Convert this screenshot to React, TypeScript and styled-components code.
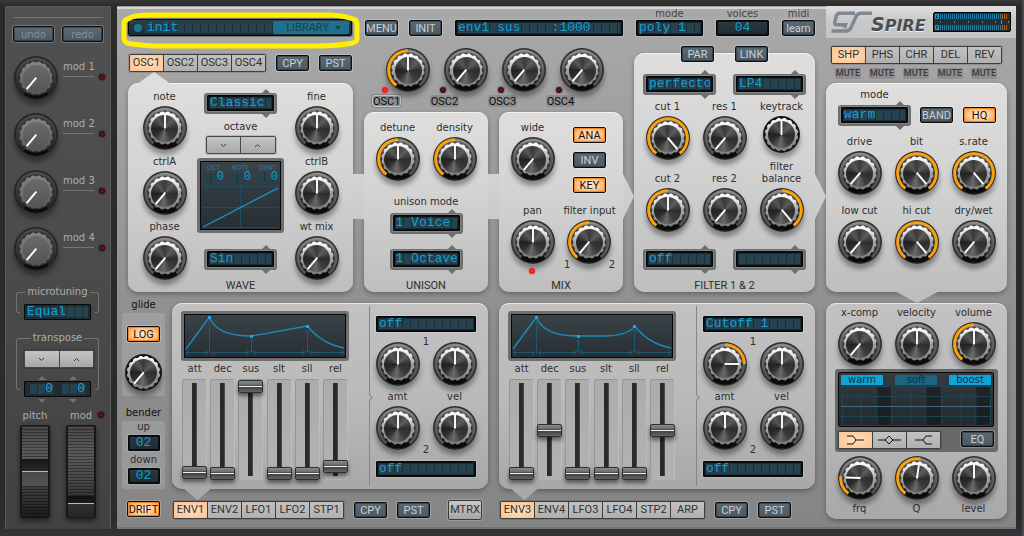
import React from "react";
import styled, { createGlobalStyle, css } from "styled-components";

const ui = `"DejaVu Sans", Verdana, sans-serif`;
const caps = `Roboto, "Liberation Sans", sans-serif`;
const mono = `"Liberation Mono", monospace`;

const Global = createGlobalStyle`
  *, *::before, *::after { box-sizing: border-box; }
  body { margin: 0; background: #2c2c2c; font: 10px/12px ${ui}; color: #2e2e2e; }
  button, input, select, output { font: inherit; color: inherit; margin: 0; padding: 0; }
  fieldset { margin: 0; padding: 0; border: 0; min-width: 0; }
`;

/* ---------- page frame ---------- */

const Page = styled.div`
  display: flex;
  gap: 6px;
  padding: 6px 6px 7px 5px;
  border-right: 2px solid #434b55;
  border-bottom: 1px solid #555557;
  background: linear-gradient(#383838, #2b2b2b 6px, #2b2b2b 520px, #343436);
`;

const Sidebar = styled.aside`
  flex: none;
  width: 106px;
  padding: 11px 8px;
  color: #adadad;
  background: linear-gradient(#505050, #4b4b4b 50%, #424242);
  box-shadow: inset -1px 0 #5a5a5a, inset 1px 1px #585858;
`;

const Main = styled.main`
  flex: 1;
  min-width: 0;
  display: grid;
  grid-template-columns: 698fr 190fr;
  gap: 11px;
  padding-bottom: 9px;
  background: linear-gradient(#a9a9a9, #9d9d9d 30%, #8f8f8f 60%, #858585);
  box-shadow: inset 0 1px #a2a2a2, inset 0 3px #d6d6d6, inset 0 -2px #727272;
`;

const Column = styled.div<{ $gap?: number; $top?: number; $align?: string }>`
  display: flex;
  flex-direction: column;
  min-width: 0;
  gap: ${(p) => p.$gap ?? 0}px;
  padding-top: ${(p) => p.$top ?? 0}px;
  align-items: ${(p) => p.$align ?? "stretch"};
`;

const Row = styled.div<{ $gap?: number; $left?: number; $justify?: string; $align?: string }>`
  display: flex;
  gap: ${(p) => p.$gap ?? 0}px;
  padding-left: ${(p) => p.$left ?? 0}px;
  justify-content: ${(p) => p.$justify ?? "flex-start"};
  align-items: ${(p) => p.$align ?? "center"};
`;

const Synth = styled(Column)`
  padding-left: 5px;
`;

const TopBar = styled.header`
  display: grid;
  grid-template-columns: 224fr auto 168fr 67px 53px 33px;
  gap: 13px;
  align-items: end;
  height: 40px;
  padding: 0 0 10px 6px;
`;

const OscSection = styled.section`
  display: grid;
  grid-template-columns: 225fr 259fr 181fr;
  gap: 11px;
  padding-left: 6px;
  margin-bottom: 11px;
`;

const OscMixer = styled.div`
  display: grid;
  grid-template-columns: repeat(4, 1fr);
  padding: 2px 23px 5px 8px;
`;

const TwoPanels = styled.div`
  flex: 1;
  display: grid;
  grid-template-columns: 1fr 1fr;
  gap: 11px;
`;

const ModSection = styled.section`
  display: flex;
  gap: 7px;
`;

const Envelopes = styled.div`
  flex: 1;
  display: grid;
  grid-template-columns: 1fr 1fr;
  gap: 11px;
`;

/* ---------- panels ---------- */

type Link = "bridge" | "arrow";

const Panel = styled.section<{ $tone?: "light" | "mid"; $link?: Link; $grow?: boolean; $top?: number; $bottom?: number }>`
  position: relative;
  display: flex;
  flex-direction: column;
  ${(p) => p.$grow && "flex: 1;"}
  padding-top: ${(p) => p.$top ?? 0}px;
  padding-bottom: ${(p) => p.$bottom ?? 0}px;
  border-radius: 10px;
  background: ${(p) =>
    p.$tone === "mid"
      ? "linear-gradient(#c3c1c2, #bababa 50%, #a8a8a8)"
      : "linear-gradient(#dfdedd, #d3d3d3 45%, #bebebe)"};
  box-shadow: inset 0 1px rgba(255, 255, 255, 0.6), 0 2px 5px rgba(0, 0, 0, 0.32);
  ${(p) =>
    p.$link &&
    css`
      &::after {
        content: "";
        position: absolute;
        z-index: 1;
        left: 100%;
        bottom: 73px;
        width: 11px;
        height: 45px;
        background: linear-gradient(#d3d3d3, #cacaca);
        ${p.$link === "arrow" && "clip-path: polygon(0 0, 100% 50%, 0 100%);"}
      }
    `}
`;

const Notch = styled.i<{ $side: "top" | "bottom"; $at: string; $w: number; $tint: string }>`
  position: absolute;
  z-index: 1;
  left: ${(p) => p.$at};
  width: ${(p) => p.$w}px;
  height: 12px;
  background: ${(p) => p.$tint};
  ${(p) =>
    p.$side === "top"
      ? "bottom: calc(100% - 1px); clip-path: polygon(50% 0, 100% 100%, 0 100%);"
      : "top: calc(100% - 1px); clip-path: polygon(0 0, 100% 0, 50% 100%);"}
`;

const PanelTitle = styled.h2`
  margin: auto 0 0;
  font: 400 11px/12px ${caps};
  text-align: center;
`;

const KnobGrid = styled.div<{ $cols: number }>`
  display: grid;
  grid-template-columns: repeat(${(p) => p.$cols}, 1fr);
  justify-items: center;
  padding: 0 5px;
`;

const WaveGrid = styled.div`
  display: grid;
  grid-template-columns: 57px 1fr 57px;
  flex: 1;
  padding: 0 8px;
`;

const Caption = styled.span<{ $dark?: boolean }>`
  display: block;
  text-align: center;
  white-space: pre;
  color: ${(p) => (p.$dark ? "#111" : "inherit")};
`;

/* ---------- buttons ---------- */

const Button = styled.button<{ $lit?: boolean; $wide?: boolean }>`
  flex: none;
  width: ${(p) => (p.$wide ? 41 : 33)}px;
  height: 16px;
  border: 1px solid #0c0f11;
  border-radius: 2px;
  font: 400 11px/13px ${caps};
  text-align: center;
  white-space: nowrap;
  color: #ccd0d3;
  background: linear-gradient(#5a6973, #4a5963);
  box-shadow: 0 0 0 1px rgba(255, 255, 255, 0.22), inset 0 0 0 1px rgba(0, 0, 0, 0.3);
  ${(p) =>
    p.$lit &&
    css`
      color: #1a1009;
      background: radial-gradient(ellipse at center, #ffecd8 0, #ffc58b 55%, #fb8a24 100%);
      box-shadow: 0 0 0 1px rgba(255, 255, 255, 0.22), inset 0 0 0 1px #f08726;
    `}
`;

const MutedButton = styled(Button)`
  font: 10px/13px ${ui};
  color: #86909a;
`;

const PlainButton = styled.button`
  width: 34px;
  height: 20px;
  margin-left: auto;
  border: 1px solid #3a3a3a;
  border-radius: 2px;
  font: 11px/18px ${caps};
  color: #333;
  background: linear-gradient(#c6c6c6, #a6a6a6);
  box-shadow: 0 0 0 1px rgba(255, 255, 255, 0.2);
`;

const TabBar = styled.div`
  display: flex;
  flex: none;
  height: 18px;
  border: 1px solid #3e3e3e;
  border-radius: 2px;
  background: #3e3e3e;
  gap: 1px;
  box-shadow: 0 0 0 1px rgba(0, 0, 0, 0.12);
`;

const Tab = styled.button<{ $on?: boolean }>`
  width: 33px;
  border: 0;
  font: 11px/16px ${caps};
  white-space: nowrap;
  color: #303030;
  display: grid;
  place-items: center;
  background: ${(p) =>
    p.$on ? "radial-gradient(ellipse, #ffe0be, #fcc394)" : "linear-gradient(#c2c2c2, #b0b0b0)"};
`;

const Mute = styled.button`
  width: 26px;
  height: 11px;
  border: 0;
  border-radius: 2px;
  font: 500 9px/11px ${caps};
  color: #3b3b3b;
  background: #8e8e8e;
`;

/* ---------- displays ---------- */

const cells = `repeating-linear-gradient(90deg, #26424f 0 7px, #1c2d36 7px 8px)`;

const lcd = css`
  height: 16px;
  border: 1px solid #050809;
  border-radius: 1px;
  font: 13px/14px ${mono};
  color: #119fd4;
  white-space: pre;
  overflow: hidden;
  background: ${cells} 2px 2px / calc(100% - 4px) 10px no-repeat, #1c2c35;
`;

const LcdOutput = styled.output<{ $center?: boolean }>`
  ${lcd}
  display: block;
  width: 100%;
  padding: 0 2px;
  box-shadow: 0 0 0 1px rgba(255, 255, 255, 0.16), inset 0 0 0 1px #0a1013;
  ${(p) => p.$center && "text-align: center; background: linear-gradient(#2b3940, #1e2a30);"}
`;

const LcdSelect = styled.select`
  ${lcd}
  appearance: none;
  display: block;
  width: 100%;
  padding: 0 2px;
  outline: 0;
  box-shadow: 0 0 0 1px rgba(255, 255, 255, 0.16), inset 0 0 0 1px #0a1013;
`;

const LcdFrame = styled.span`
  position: relative;
  display: block;
  flex: none;
  width: 73px;
  padding: 2px 3px 3px;
  border-radius: 3px;
  background: #6e6e6e;
  &::before,
  &::after {
    content: "";
    position: absolute;
    right: 7px;
    border: 4px solid transparent;
    border-top: 0;
    border-bottom: 4px solid #6e6e6e;
    bottom: 100%;
  }
  &::after {
    bottom: auto;
    top: 100%;
    border-bottom: 0;
    border-top: 4px solid #6e6e6e;
  }
`;

function Picker({ name, value, framed }: { name: string; value: string; framed?: boolean }) {
  const select = (
    <LcdSelect aria-label={name} defaultValue={value}>
      <option>{value}</option>
    </LcdSelect>
  );
  return framed ? <LcdFrame>{select}</LcdFrame> : select;
}

const Browser = styled.div`
  position: relative;
  display: flex;
  align-items: center;
  height: 17px;
  padding: 0 2px 0 5px;
  border: 1px solid #050809;
  border-radius: 2px;
  background: ${cells} 16px 3px / 140px 10px no-repeat, linear-gradient(#2f3d45, #1d2b33);
  box-shadow: 0 0 0 1px rgba(0, 0, 0, 0.3);
  font: 13px/14px ${mono};
  color: #119fd4;
  &::before {
    content: "";
    width: 8px;
    height: 8px;
    margin-right: 5px;
    border-radius: 50%;
    background: #1c7797;
  }
`;

const LibraryButton = styled.button`
  display: flex;
  align-items: center;
  justify-content: flex-end;
  gap: 6px;
  width: 76px;
  height: 13px;
  margin-left: auto;
  padding-right: 8px;
  border: 0;
  border-radius: 2px;
  font: 11px/13px ${caps};
  color: #1d3e4e;
  background: #1f6f8e;
`;

const Marker = styled.svg`
  position: absolute;
  z-index: 3;
  left: -8px;
  top: -9px;
  width: calc(100% + 18px);
  height: 38px;
  pointer-events: none;
`;

const Led = styled.i<{ $on?: boolean }>`
  display: block;
  flex: none;
  width: 6px;
  height: 6px;
  border-radius: 50%;
  background: ${(p) => (p.$on ? "radial-gradient(#ff3a3a, #f21414 60%, #a31a1a)" : "radial-gradient(#8a1414, #3a0a0a 60%, #150505)")};
  box-shadow: 0 0 1px 1px ${(p) => (p.$on ? "rgba(255,60,60,.3)" : "rgba(0,0,0,.25)")};
`;

const Screen = styled.div`
  border: 3px solid #6e6e6e;
  border-radius: 3px;
  background: linear-gradient(#3a4349, #262e33);
  box-shadow: inset 0 0 0 1px #050708;
  overflow: hidden;
  svg {
    display: block;
    width: 100%;
  }
`;

/* ---------- knob ---------- */

const Field = styled.label<{ $below?: boolean }>`
  display: flex;
  flex-direction: ${(p) => (p.$below ? "column-reverse" : "column")};
  align-items: center;
  gap: 3px;
`;

const DialBox = styled.span<{ $size: number }>`
  position: relative;
  display: grid;
  place-items: center;
  flex: none;
  width: ${(p) => p.$size}px;
  height: ${(p) => p.$size}px;
  border-radius: 50%;
  box-shadow: 0 5px 5px rgba(0, 0, 0, 0.36);
  > * {
    grid-area: 1 / 1;
  }
  svg {
    z-index: 0;
    display: block;
  }
`;

const Cap = styled.span<{ $flat?: boolean }>`
  z-index: 1;
  width: 27px;
  height: 27px;
  border-radius: 50%;
  background: ${(p) =>
    p.$flat
      ? "linear-gradient(#6a6a6a, #555)"
      : "conic-gradient(#3a3a3a, #5c5c5c 12%, #2e2e2e 25%, #3b3b3b 40%, #6a6a6a 52%, #2f2f2f 65%, #222 75%, #575757 90%, #3a3a3a)"};
`;

const Needle = styled.svg`
  && {
    z-index: 2;
  }
`;

const HiddenRange = styled.input`
  position: absolute;
  z-index: 3;
  inset: 0;
  width: 100%;
  height: 100%;
  opacity: 0;
  cursor: pointer;
`;

const polar = (r: number, deg: number) => {
  const a = (deg * Math.PI) / 180;
  return `${(22 + r * Math.sin(a)).toFixed(2)} ${(22 - r * Math.cos(a)).toFixed(2)}`;
};

const scallop = (radius: number, depth: number, lobes: number) => {
  const pts: string[] = [];
  for (let d = 0; d < 360; d += 4) {
    pts.push(polar(radius + depth * Math.abs(Math.sin((d * lobes * Math.PI) / 360)), d));
  }
  return `M${pts.join("L")}Z`;
};
const rim = scallop(15.2, 1.6, 16);

type DialProps = { turn?: number; arc?: [number, number]; flat?: boolean; small?: boolean; name?: string };

function Dial({ turn = -140, arc, flat, small, name }: DialProps) {
  const size = small ? 37 : 44;
  const view = small ? "3.5 3.5 37 37" : "0 0 44 44";
  return (
    <DialBox $size={size}>
      <svg width={size} height={size} viewBox={view} aria-hidden>
        {small ? (
          <circle cx="22" cy="22" r="18.5" fill="#161616" />
        ) : (
          <>
            <circle cx="22" cy="22" r="22" fill={flat ? "#242424" : "#2d2d2d"} />
            <circle cx="22" cy="22" r="20.4" fill={flat ? "url(#bodyFlat)" : "url(#body)"} />
            <path d={`M22 22L${polar(20.6, 143)}A20.6 20.6 0 0 1 ${polar(20.6, 217)}Z`} fill="#0b0b0b" />
            <circle cx="22" cy="22" r="17.6" fill={flat ? "#303030" : "url(#well)"} />
          </>
        )}
        {arc && (
          <path
            d={`M${polar(19.4, arc[0])}A19.4 19.4 0 ${arc[1] - arc[0] > 180 ? 1 : 0} 1 ${polar(19.4, arc[1])}`}
            fill="none"
            stroke="#fda108"
            strokeWidth="2.8"
          />
        )}
        <path d={rim} fill={flat ? "url(#rimFlat)" : "url(#rim)"} />
      </svg>
      <Cap $flat={flat} />
      <Needle width={size} height={size} viewBox={view} aria-hidden>
        <line x1="22" y1="22.5" x2="22" y2="7.5" stroke="#fff" strokeWidth="1.9" transform={`rotate(${turn} 22 22)`} />
      </Needle>
      <HiddenRange type="range" min={-140} max={140} defaultValue={turn} aria-label={name} />
    </DialBox>
  );
}

function Knob({ label, below, ...dial }: { label: string; below?: boolean } & DialProps) {
  return (
    <Field $below={below}>
      <Caption>{label}</Caption>
      <Dial {...dial} />
    </Field>
  );
}

const Defs = styled.svg`
  position: absolute;
  width: 0;
  height: 0;
`;

function Gradients() {
  const stops = (list: [string, string][]) => list.map(([o, c]) => <stop key={o} offset={o} stopColor={c} />);
  return (
    <Defs aria-hidden>
      <defs>
        <linearGradient id="body" x2="0" y2="1">{stops([["0", "#8d8d8d"], [".45", "#616161"], ["1", "#4a4a4a"]])}</linearGradient>
        <linearGradient id="bodyFlat" x2="0" y2="1">{stops([["0", "#4c4c4c"], [".6", "#333"], ["1", "#1e1e1e"]])}</linearGradient>
        <linearGradient id="well" x2="0" y2="1">{stops([["0", "#4d4d4d"], [".5", "#333"], ["1", "#070707"]])}</linearGradient>
        <linearGradient id="rim" x2="0" y2="1">{stops([["0", "#fff"], [".22", "#e4e4e4"], [".5", "#a4a4a4"], ["1", "#7c7c7c"]])}</linearGradient>
        <linearGradient id="rimFlat" x2="0" y2="1">{stops([["0", "#858585"], [".6", "#6a6a6a"], ["1", "#555"]])}</linearGradient>
      </defs>
    </Defs>
  );
}

/* ---------- stepper ---------- */

const StepperBox = styled.div`
  display: grid;
  grid-template-columns: 1fr 1fr;
  gap: 1px;
  width: 70px;
  height: 18px;
  border: 1px solid #474747;
  border-radius: 2px;
  background: #474747;
  box-shadow: 0 0 0 1px rgba(0, 0, 0, 0.15);
`;

const Step = styled.button`
  display: grid;
  place-items: center;
  border: 0;
  background: linear-gradient(#c4c4c4, #a8a8a8);
`;

function Stepper({ name }: { name: string }) {
  return (
    <StepperBox>
      {["M1 1l2.5 2.5L6 1", "M1 4l2.5-2.5L6 4"].map((d, i) => (
        <Step key={d} aria-label={`${name} ${i ? "up" : "down"}`}>
          <svg width="7" height="5" fill="none" stroke="#3c3c3c">
            <path d={d} />
          </svg>
        </Step>
      ))}
    </StepperBox>
  );
}

/* ---------- sidebar ---------- */

const Rule = styled.hr`
  height: 1px;
  width: 100%;
  margin: 0;
  border: 0;
  background: #747474;
`;

const ModList = styled.div`
  display: flex;
  flex-direction: column;
  gap: 13px;
  padding: 14px 0 15px 1px;
`;

const ModItem = styled.label`
  display: grid;
  grid-template-columns: 44px 31px 6px;
  column-gap: 5px;
  align-items: start;
`;

const ModName = styled.span`
  padding: 5px 0 3px;
  border-bottom: 1px solid #757575;
  white-space: nowrap;
`;

const ModLed = styled.span`
  padding-top: 18px;
`;

const Group = styled.fieldset<{ $after: number }>`
  width: 83px;
  margin: 0 auto ${(p) => p.$after}px 3px;
  padding: 6px 7px 0;
  border: 1px solid #737373;
  border-radius: 2px;
  legend {
    margin: 0 auto;
    padding: 0 2px;
  }
`;

/* The display hangs over the lower edge of its group. */
const GroupFoot = styled.div`
  height: 8px;
  > :first-child {
    box-shadow: -4px 0 #484848, 4px 0 #484848;
  }
`;

const Arrows = styled.div<{ $down?: boolean }>`
  display: flex;
  justify-content: space-around;
  padding: ${(p) => (p.$down ? "2px 2px 0" : "8px 2px 1px")};
  &::before,
  &::after {
    content: "";
    border: 4px solid transparent;
    ${(p) => (p.$down ? "border-top-color: #717171; border-bottom: 0;" : "border-bottom-color: #717171; border-top: 0;")}
  }
`;

const ValuePair = styled.div`
  display: grid;
  grid-template-columns: 1fr 1fr;
  gap: 9px;
  height: 16px;
  padding: 0 5px;
  border: 1px solid #050809;
  border-radius: 1px;
  font: 13px/14px ${mono};
  color: #119fd4;
  text-align: right;
  background: #202c32;
  output {
    background: ${cells} 0 2px / 100% 10px no-repeat;
  }
`;

const Wheels = styled.div`
  display: grid;
  grid-template-columns: 30px 30px auto;
  gap: 3px 16px;
  justify-items: center;
  padding-left: 7px;
`;

const WheelField = styled.label`
  position: relative;
  display: flex;
  flex-direction: column;
  align-items: center;
  gap: 3px;
`;

const WheelLed = styled.span`
  position: absolute;
  left: calc(100% + 2px);
  top: 2px;
`;

const Wheel = styled.span<{ $face: string }>`
  width: 30px;
  height: 93px;
  border: 1px solid #171717;
  border-width: 1px 2px;
  border-radius: 2px;
  background: ${(p) => p.$face}, repeating-linear-gradient(rgba(0, 0, 0, 0.35) 0 1px, transparent 1px 3px),
    linear-gradient(#484848, #5b5b5b 30%, #474747 60%, #1c1c1c);
  box-shadow: 0 3px 5px rgba(0, 0, 0, 0.5);
`;

const PITCH_FACE =
  "linear-gradient(transparent 33px, #161616 33px, #2a2a2a 45px, #b9b9b9 45px, #b9b9b9 46px, #4a4a4a 46px, #525252 60px, transparent 60px)";
const MOD_FACE =
  "linear-gradient(transparent 70px, #101010 70px, #1a1a1a 77px, #b9b9b9 77px, #b9b9b9 78px, #303030 78px, #262626 91px)";

function Side() {
  return (
    <Sidebar>
      <Column $gap={8}>
        <Rule />
        <Row $gap={8}>
          <MutedButton $wide>undo</MutedButton>
          <MutedButton $wide>redo</MutedButton>
        </Row>
      </Column>
      <ModList>
        {[1, 2, 3, 4].map((n) => (
          <ModItem key={n}>
            <Dial flat />
            <ModName>mod {n}</ModName>
            <ModLed><Led /></ModLed>
          </ModItem>
        ))}
      </ModList>
      <Group $after={19}>
        <legend>microtuning</legend>
        <GroupFoot><Picker name="microtuning" value="Equal" /></GroupFoot>
      </Group>
      <Group $after={20}>
        <legend>transpose</legend>
        <Stepper name="transpose" />
        <Arrows />
        <GroupFoot>
          <ValuePair>
            <output>0</output>
            <output>0</output>
          </ValuePair>
          <Arrows $down />
        </GroupFoot>
      </Group>
      <Wheels>
        <WheelField>pitch<Wheel $face={PITCH_FACE} /><HiddenRange type="range" /></WheelField>
        <WheelField>
          mod
          <Wheel $face={MOD_FACE} />
          <WheelLed><Led /></WheelLed>
          <HiddenRange type="range" defaultValue={0} />
        </WheelField>
      </Wheels>
    </Sidebar>
  );
}

/* ---------- top bar ---------- */

const TopField = styled.label`
  display: flex;
  flex-direction: column;
  align-items: center;
  color: #454545;
`;

function Top() {
  return (
    <TopBar>
      <Browser>
        init
        <LibraryButton>
          LIBRARY
          <svg width="6" height="4"><path d="M0 0h6L3 4z" fill="#1d3e4e" /></svg>
        </LibraryButton>
        <Marker viewBox="0 0 242 38" preserveAspectRatio="none" aria-hidden>
          <path
            d="M7 8Q12 4 28 4H212Q226 5 234 8Q238 9 238 14V28Q238 32 228 33Q214 35 196 35H34Q16 34 6 32Q3 30 3 27V13Q3 9 7 8Z"
            fill="none"
            stroke="#fff000"
            strokeWidth="5"
          />
        </Marker>
      </Browser>
      <Row $gap={11}>
        <Button>MENU</Button>
        <Button>INIT</Button>
      </Row>
      <LcdOutput>{"env1 sus    :1000"}</LcdOutput>
      <TopField>mode<Picker name="mode" value="poly 1" /></TopField>
      <TopField>voices<LcdOutput $center>04</LcdOutput></TopField>
      <TopField as="div">midi<Button>learn</Button></TopField>
    </TopBar>
  );
}

/* ---------- oscillators ---------- */

const WaveScreen = styled(Screen)`
  width: 87px;
  height: 75px;
  padding: 3px 3px 0;
`;

const WaveReadout = styled.div`
  display: grid;
  grid-template-columns: repeat(3, 1fr);
  gap: 0 6px;
  margin-bottom: 3px;
  font: 7px/8px ${caps};
  color: #1a7ea6;
  text-align: center;
  output {
    font: 12px/10px ${mono};
    color: #119fd4;
    text-align: right;
    background: ${cells} 0 1px / 100% 9px no-repeat;
  }
`;

const OscCell = styled.div`
  position: relative;
  display: flex;
  flex-direction: column;
  gap: 3px;
`;

const OscDial = styled.div`
  margin-left: 14px;
`;

const OscLed = styled.span`
  position: absolute;
  z-index: 4;
  left: 10px;
  top: 39px;
`;

const OscTag = styled.button<{ $on?: boolean }>`
  width: 29px;
  height: 12px;
  border: ${(p) => (p.$on ? "1px solid #c4c4c4" : "0")};
  border-radius: 3px;
  font: 11px/11px ${caps};
  color: #0c0c0c;
  background: #8e8e8e;
  box-shadow: ${(p) => (p.$on ? "0 0 0 1px #858585" : "none")};
`;

const FloatTop = styled(Row)`
  margin-top: -7px;
`;

const FilterPanel = styled(Panel)`
  margin-top: 7px;
`;

const CenterLed = styled.div`
  position: absolute;
  left: 50%;
  top: calc(100% + 4px);
  margin-left: -4px;
`;

const PanField = styled.div`
  position: relative;
`;

const UnisonKnob = styled.div`
  width: 57px;
`;

const InputField = styled.div`
  position: relative;
  width: 57px;
  display: flex;
  justify-content: center;
`;

const Ends = styled.span`
  position: absolute;
  left: 3px;
  right: 3px;
  bottom: -7px;
  display: flex;
  justify-content: space-between;
`;

const FilterBody = styled(Column)`
  > :nth-child(1) { margin-bottom: 12px; }
  > :nth-child(2) { margin-bottom: 6px; }
  > :nth-child(3) { margin-bottom: 1px; }
  > :nth-child(4) { margin-bottom: 17px; align-items: end; }
`;

function Oscillators() {
  return (
    <OscSection>
      <Column $top={8} $gap={11}>
        <Row $gap={10} $left={1}>
          <TabBar>
            {["OSC1", "OSC2", "OSC3", "OSC4"].map((t, i) => <Tab key={t} $on={i === 0}>{t}</Tab>)}
          </TabBar>
          <Button>CPY</Button>
          <Button>PST</Button>
        </Row>
        <Panel $link="bridge" $top={8} $grow>
          <Notch $side="top" $at="9px" $w={34} $tint="#dfdedd" />
          <WaveGrid>
            <Column $gap={6}>
              <Knob label="note" turn={0} />
              <Knob label="ctrlA" />
              <Knob label="phase" />
            </Column>
            <Column $top={2} $gap={16} $align="center">
              <Column $gap={4} $align="center">
                <Column $gap={7} $align="center">
                  <Picker name="wavetable" value="Classic" framed />
                  <Column $gap={3} $align="center">
                    <Caption>octave</Caption>
                    <Stepper name="octave" />
                  </Column>
                </Column>
                <WaveScreen>
                  <WaveReadout>
                    <span>OCT</span><span>NOTE</span><span>CENT</span>
                    <output>0</output><output>0</output><output>0</output>
                  </WaveReadout>
                  <svg height="44" viewBox="0 0 75 44" preserveAspectRatio="none">
                    <path d="M0 1.5H75M0 22.5H75M0 42.5H75M37.5 2V42" stroke="#1c4d62" fill="none" />
                    <path d="M0 42L75 3" stroke="#1b93c0" strokeWidth="1.4" />
                  </svg>
                </WaveScreen>
              </Column>
              <Picker name="waveform" value="Sin" framed />
            </Column>
            <Column $gap={6}>
              <Knob label="fine" turn={0} />
              <Knob label="ctrlB" turn={0} />
              <Knob label="wt mix" />
            </Column>
          </WaveGrid>
          <PanelTitle>WAVE</PanelTitle>
        </Panel>
      </Column>

      <Column>
        <OscMixer>
          {["OSC1", "OSC2", "OSC3", "OSC4"].map((t, i) => (
            <OscCell key={t}>
              <OscDial><Dial name={`${t} level`} turn={i ? -140 : 0} arc={i ? undefined : [-143, 0]} /></OscDial>
              <OscLed><Led $on={i === 0} /></OscLed>
              <OscTag $on={i === 0}>{t}</OscTag>
            </OscCell>
          ))}
        </OscMixer>
        <TwoPanels>
          <Panel $link="bridge" $top={10}>
            <Column $gap={15} $align="center">
              <KnobGrid $cols={2}>
                <UnisonKnob><Knob label="detune" turn={0} arc={[-143, 0]} /></UnisonKnob>
                <UnisonKnob><Knob label="density" turn={0} arc={[-143, 0]} /></UnisonKnob>
              </KnobGrid>
              <Column $gap={5} $align="center">
                <Caption>unison mode</Caption>
                <Picker name="unison voices" value="1 Voice" framed />
              </Column>
              <Picker name="unison spread" value="1 Octave" framed />
            </Column>
            <PanelTitle>UNISON</PanelTitle>
          </Panel>
          <Panel $link="arrow" $top={10}>
            <Column $gap={12}>
              <KnobGrid $cols={2}>
                <Knob label="wide" />
                <Column $top={5} $gap={9}>
                  <Button $lit>ANA</Button>
                  <Button>INV</Button>
                  <Button $lit>KEY</Button>
                </Column>
              </KnobGrid>
              <KnobGrid $cols={2}>
                <PanField>
                  <Knob label="pan" turn={0} />
                  <CenterLed><Led $on /></CenterLed>
                </PanField>
                <InputField>
                  <Knob label="filter input" turn={-140} arc={[-143, 0]} />
                  <Ends><span>1</span><span>2</span></Ends>
                </InputField>
              </KnobGrid>
            </Column>
            <PanelTitle>MIX</PanelTitle>
          </Panel>
        </TwoPanels>
      </Column>

      <FilterPanel $link="arrow">
        <FilterBody>
          <FloatTop $gap={21} $justify="center">
            <Button>PAR</Button>
            <Button>LINK</Button>
          </FloatTop>
          <Row $gap={17} $justify="center">
            <Picker name="filter 1 type" value="perfecto" framed />
            <Picker name="filter 1 slope" value="LP4" framed />
          </Row>
          <KnobGrid $cols={3}>
            <Knob label="cut 1" turn={140} arc={[-143, 143]} />
            <Knob label="res 1" />
            <Knob label="keytrack" turn={0} small />
          </KnobGrid>
          <KnobGrid $cols={3}>
            <Knob label="cut 2" turn={0} arc={[-143, 0]} />
            <Knob label="res 2" />
            <Knob label={"filter\nbalance"} turn={140} arc={[0, 143]} />
          </KnobGrid>
          <Row $gap={17} $justify="center">
            <Picker name="filter 2 type" value="off" framed />
            <Picker name="filter 2 slope" value=" " framed />
          </Row>
        </FilterBody>
        <PanelTitle>FILTER 1 &amp; 2</PanelTitle>
      </FilterPanel>
    </OscSection>
  );
}

/* ---------- envelopes ---------- */

const EnvPanel = styled(Panel)`
  display: grid;
  grid-template-columns: 197fr 119fr;
`;

const EnvLeft = styled.div`
  display: flex;
  flex-direction: column;
  gap: 2px;
  padding: 8px 20px 9px 9px;
`;

const Faders = styled.div`
  display: grid;
  grid-template-columns: repeat(6, 1fr);
  gap: 3px;
  padding: 0 1px;
`;

const FaderField = styled.label`
  display: flex;
  flex-direction: column;
  align-items: center;
  gap: 4px;
`;

const Fader = styled.input`
  appearance: none;
  writing-mode: vertical-lr;
  direction: rtl;
  width: 25px;
  height: 101px;
  border-radius: 3px;
  border: 1px solid #969696;
  border-bottom: 0;
  border-right-color: #bdbdbd;
  background: linear-gradient(90deg, #2a2a2a 4px, #4a4a4a 4px) center 3px / 5px 93px no-repeat, linear-gradient(#acacac, #b2b2b2);
  &::-webkit-slider-thumb {
    appearance: none;
    width: 25px;
    height: 13px;
    border: 1px solid #2f2f2f;
    border-radius: 2px;
    background: linear-gradient(#8a8a8a, #6c6c6c 4px, #303030 5px, #f2f2f2 5px, #f2f2f2 6px, #404040 6px, #666);
    box-shadow: 0 3px 4px rgba(0, 0, 0, 0.5);
  }
`;

const EnvRight = styled.div`
  position: relative;
  display: flex;
  flex-direction: column;
  align-items: center;
  padding: 13px 5px 0 0;
  &::before {
    content: "";
    position: absolute;
    left: 0;
    top: 3px;
    bottom: 3px;
    border-left: 1px solid #868686;
  }
  &::after {
    content: "";
    position: absolute;
    left: -2px;
    top: 92px;
    width: 5px;
    height: 5px;
    border: solid #868686;
    border-width: 1px 1px 0 0;
    background: #b8b8b8;
    transform: rotate(45deg);
  }
`;

const EnvLcd = styled.div`
  width: 100px;
`;

const Slot = styled.div<{ $last?: boolean }>`
  display: grid;
  grid-template-columns: 44px 13px 44px;
  padding: ${(p) => (p.$last ? "3px 0 11px" : "10px 0 5px")};
`;

const SlotNumber = styled.span<{ $end?: boolean }>`
  align-self: ${(p) => (p.$end ? "end" : "start")};
  margin: -6px 0;
  text-align: center;
`;

const SlotCaptions = styled.div`
  display: grid;
  grid-template-columns: 57px 57px;
`;

type EnvProps = {
  curve: string;
  values: number[];
  first: { source: string; turn: number; arc?: [number, number] };
};

function Envelope({ curve, values, first }: EnvProps) {
  const names = ["att", "dec", "sus", "slt", "sll", "rel"];
  return (
    <EnvPanel $tone="mid">
      <Notch $side="bottom" $at="11px" $w={29} $tint="#a9a9a9" />
      <EnvLeft>
        <Screen>
          <svg height="44" viewBox="0 0 162 44" preserveAspectRatio="none">
            <g stroke="#1f5a70" fill="none">
              <path d="M25.5 4V40M67.5 26V38M123.5 16V38" />
              <path d="M3 38.5H23M28 38.5H64M70 38.5H120M127 38.5H159" />
              <path d="M5 36L2 38.5L5 41M21 36L24 38.5L21 41M30 36L27.500 38.500L30 41M62 36L65 38.500L62 41M72 36L69 38.500L72 41M118 36L121 38.500L118 41M129 36L126 38.500L129 41M157 36L160 38.500L157 41" />
              <path d="M65 28.500L67.500 25.500L70 28.500M121 18.500L123.500 15.500L126 18.500M65 36L67.500 39L70 36M121 36L123.500 39L126 36" />
            </g>
            <path d={curve} stroke="#1b8dba" strokeWidth="1.3" fill="none" />
            <path d="M24 2h3v3h-3zM66 21h3v3h-3zM122 11h3v3h-3z" fill="#18a7e0" />
          </svg>
        </Screen>
        <Faders>
          {names.map((n, i) => (
            <FaderField key={n}>
              {n}
              <Fader type="range" min={0} max={100} defaultValue={values[i]} />
            </FaderField>
          ))}
        </Faders>
      </EnvLeft>
      <EnvRight>
        <EnvLcd><Picker name="target 1" value={first.source} /></EnvLcd>
        <Slot>
          <Dial name="amount 1" turn={first.turn} arc={first.arc} />
          <SlotNumber>1</SlotNumber>
          <Dial name="velocity 1" turn={0} />
        </Slot>
        <SlotCaptions>
          <Caption>amt</Caption>
          <Caption>vel</Caption>
        </SlotCaptions>
        <Slot $last>
          <Dial name="amount 2" turn={0} />
          <SlotNumber $end>2</SlotNumber>
          <Dial name="velocity 2" turn={0} />
        </Slot>
        <EnvLcd><Picker name="target 2" value="off" /></EnvLcd>
      </EnvRight>
    </EnvPanel>
  );
}

const BenderColumn = styled.div`
  display: flex;
  flex-direction: column;
  align-items: center;
  flex: none;
  width: 43px;
  margin-top: -4px;
`;

const Tray = styled.div<{ $top?: number; $gap: number; $after: number }>`
  display: flex;
  flex-direction: column;
  align-items: center;
  gap: ${(p) => p.$gap}px;
  width: 43px;
  margin: 2px 0 ${(p) => p.$after}px;
  padding: ${(p) => p.$top ?? 0}px 0 5px;
  border-radius: 3px;
  background: rgba(255, 255, 255, 0.14);
`;

const SmallField = styled.label`
  display: flex;
  flex-direction: column;
  gap: 2px;
  width: 32px;
  text-align: center;
`;

const Footer = styled(Row)`
  height: 18px;
  padding-right: 6px;
`;

function Modulation() {
  return (
    <ModSection>
      <BenderColumn>
        <Caption $dark>glide</Caption>
        <Tray $top={13} $gap={12} $after={11}>
          <Button $lit>LOG</Button>
          <Dial small name="glide" />
        </Tray>
        <Caption $dark>bender</Caption>
        <Tray $gap={3} $after={12}>
          <SmallField>up<LcdOutput $center>02</LcdOutput></SmallField>
          <SmallField>down<LcdOutput $center>02</LcdOutput></SmallField>
        </Tray>
        <Button $lit>DRIFT</Button>
      </BenderColumn>
      <Envelopes>
        <Column $gap={12}>
          <Envelope
            curve="M2 35L25.500 3Q32 22 67.500 22L123.500 12Q138 30 160 34"
            values={[1, 0, 100, 0, 0, 8]}
            first={{ source: "off", turn: 0 }}
          />
          <Footer $gap={10} $left={1}>
            <TabBar>
              {["ENV1", "ENV2", "LFO1", "LFO2", "STP1"].map((t, i) => <Tab key={t} $on={i === 0}>{t}</Tab>)}
            </TabBar>
            <Button>CPY</Button>
            <Button>PST</Button>
            <PlainButton>MTRX</PlainButton>
          </Footer>
        </Column>
        <Column $gap={12}>
          <Envelope
            curve="M2 35L25.500 3Q32 22 67.500 22H95Q118 21 123.500 12Q138 30 160 34"
            values={[0, 50, 0, 0, 0, 50]}
            first={{ source: "Cutoff 1", turn: 90, arc: [0, 90] }}
          />
          <Footer $gap={10} $left={1}>
            <TabBar>
              {["ENV3", "ENV4", "LFO3", "LFO4", "STP2", "ARP"].map((t, i) => <Tab key={t} $on={i === 0}>{t}</Tab>)}
            </TabBar>
            <Button>CPY</Button>
            <Button>PST</Button>
          </Footer>
        </Column>
      </Envelopes>
    </ModSection>
  );
}

/* ---------- effects column ---------- */

const Brand = styled.div`
  display: grid;
  grid-template-columns: 43px 1fr 78px;
  align-items: center;
  height: 32px;
  margin-bottom: 8px;
  padding: 0 5px 0 4px;
  background: linear-gradient(#dedede, #c9c9c9 45%, #c4c4c4);
`;

const Wordmark = styled.span`
  align-self: end;
  margin: 0 0 4px -2px;
  font: italic 700 16px/16px ${ui};
  color: #4a4e52;
  text-shadow: 0 1px #f0f0f0;
  white-space: nowrap;
  span {
    font-size: 19px;
  }
`;

const FxBody = styled.div`
  display: flex;
  flex-direction: column;
  flex: 1;
  padding-right: 9px;
`;

const Mutes = styled(Row)`
  margin: 4px 0;
`;

const EqFrame = styled.div`
  margin: 3px 9px 4px;
  padding: 3px 4px 3px 3px;
  border-radius: 3px;
  background: #696969;
`;

const EqScreen = styled.div`
  height: 55px;
  margin-bottom: 4px;
  padding: 2px;
  border: 1px solid #050708;
  border-radius: 2px;
  background: linear-gradient(#343c41, #23292d);
  svg {
    display: block;
    width: 100%;
  }
`;

const EqTabs = styled.div`
  display: flex;
  justify-content: space-between;
`;

const EqTab = styled.button<{ $on?: boolean }>`
  width: 42px;
  height: 10px;
  border: 0;
  font: 10px/10px ${ui};
  color: #0e3242;
  background: ${(p) => (p.$on ? "#10a3da" : "#1c6480")};
`;

const Between = styled(Row)`
  justify-content: space-between;
  align-items: flex-start;
`;

const FxGap = styled.div`
  height: 10px;
`;

const FxHead = styled(Row)`
  margin-bottom: 10px;
`;

const FxButtons = styled(Row)`
  padding-bottom: 3px;
`;

const OutPanel = styled(Panel)`
  margin-top: 11px;
`;

function Meter() {
  const ticks = Array.from({ length: 34 }, (_, i) => 7 + i * 2);
  return (
    <svg width="78" height="20" shapeRendering="crispEdges" aria-label="output level">
      <rect width="78" height="20" rx="2" fill="#070707" />
      <rect x="1" y="1" width="76" height="18" fill="#242d33" />
      <path d={ticks.slice(0, 31).map((x) => `M${x} 2h1v5h-1zM${x} 13h1v5h-1z`).join("")} fill="#2379a0" />
      <path d={ticks.slice(31).map((x) => `M${x} 2h1v5h-1zM${x} 13h1v5h-1z`).join("")} fill="#a8602a" />
      <path d="M7 9h1v2h-1zM21 9h1v2h-1zM35 9h1v2h-1zM49 9h1v2h-1zM62 9h1v2h-1z" fill="#2090bb" />
      <path d="M68 8h1v4h-1zM75 9h1v2h-1z" fill="#c76d22" />
      <path d="M2 2h4v5h-4zM2 13h4v5h-4z" fill="#1d9cca" />
      <path d="M3 3h1v3h-1zM4 5h1v1h-1zM3 14h1v3h-1zM4 14h1v1h-1z" fill="#12303d" />
    </svg>
  );
}

function Effects() {
  const vertical = [1, 20, 36, 51, 71, 86, 102, 122, 137, 152];
  return (
    <Column>
      <Brand>
        <svg width="43" height="24" viewBox="0 0 43 24" fill="none" stroke="#7f8890" strokeWidth="3.400" aria-hidden>
          <path d="M25 3.200H10Q7 3.200 6.300 6L4.800 12Q4.200 14.800 7 14.800H15.500L14.500 18" />
          <path d="M1.500 21H16Q19.500 21 20.800 18L26.300 6Q27.600 3.200 31 3.200H42" />
        </svg>
        <Wordmark><span>S</span>PIRE</Wordmark>
        <Meter />
      </Brand>
      <FxBody>
        <Row $left={5}>
          <TabBar>
            {["SHP", "PHS", "CHR", "DEL", "REV"].map((t, i) => <Tab key={t} $on={i === 0}>{t}</Tab>)}
          </TabBar>
        </Row>
        <Mutes $gap={8} $left={9}>
          {["SHP", "PHS", "CHR", "DEL", "REV"].map((t) => <Mute key={t} aria-label={`mute ${t}`}>MUTE</Mute>)}
        </Mutes>
        <Panel $top={6} $bottom={28}>
          <Notch $side="bottom" $at="calc(50% - 22px)" $w={45} $tint="#bebebe" />
          <FxHead $gap={9} $left={12} $align="flex-end">
            <Column $gap={4}>
              <Caption>mode</Caption>
              <Picker name="shaper mode" value="warm" framed />
            </Column>
            <FxButtons $gap={10}>
              <Button>BAND</Button>
              <Button $lit>HQ</Button>
            </FxButtons>
          </FxHead>
          <KnobGrid $cols={3}>
            <Knob label="drive" />
            <Knob label="bit" turn={140} arc={[-143, 143]} />
            <Knob label="s.rate" turn={140} arc={[-143, 143]} />
          </KnobGrid>
          <FxGap />
          <KnobGrid $cols={3}>
            <Knob label="low cut" />
            <Knob label="hi cut" turn={140} arc={[-143, 143]} />
            <Knob label="dry/wet" />
          </KnobGrid>
        </Panel>
        <OutPanel $tone="mid" $top={4} $bottom={4}>
          <KnobGrid $cols={3}>
            <Knob label="x-comp" />
            <Knob label="velocity" turn={0} />
            <Knob label="volume" turn={0} arc={[-143, 0]} />
          </KnobGrid>
          <EqFrame>
            <EqScreen>
              <EqTabs>
                <EqTab $on>warm</EqTab>
                <EqTab>soft</EqTab>
                <EqTab $on>boost</EqTab>
              </EqTabs>
              <svg height="41" viewBox="0 0 153 41" preserveAspectRatio="none" aria-hidden>
                <path d="M36 1h15v40h-15zM86 1h16v40h-16zM137 1h15v40h-15z" fill="#14181b" opacity=".6" />
                <path d={vertical.map((x) => `M${x}.5 1V41`).join("") + "M0 1.500H153M0 11.500H153M0 31.500H153M0 40.500H153"} stroke="#1d4556" />
                <path d="M0 21.500H153" stroke="#47687a" />
              </svg>
            </EqScreen>
            <Between>
              <TabBar>
                {["M0 3H6L9 7L6 11H0M9 7H17", "M0 7H7L11 3L15 7L11 11L7 7M15 7H23", "M0 7H8L11 3H17M8 7L11 11H17"].map((d, i) => (
                  <Tab key={d} $on={i === 0} aria-label={["low shelf", "peak", "high shelf"][i]}>
                    <svg width={i === 1 ? 23 : 17} height="14" fill="none" stroke="#111"><path d={d} /></svg>
                  </Tab>
                ))}
              </TabBar>
              <Button>EQ</Button>
            </Between>
          </EqFrame>
          <KnobGrid $cols={3}>
            <Knob label="frq" turn={-88} arc={[-143, -84]} below />
            <Knob label="Q" turn={8} arc={[-143, 10]} below />
            <Knob label="level" turn={0} below />
          </KnobGrid>
        </OutPanel>
      </FxBody>
    </Column>
  );
}

export default function App() {
  return (
    <>
      <Global />
      <Gradients />
      <Page>
        <Side />
        <Main>
          <Synth>
            <Top />
            <Oscillators />
            <Modulation />
          </Synth>
          <Effects />
        </Main>
      </Page>
    </>
  );
}
